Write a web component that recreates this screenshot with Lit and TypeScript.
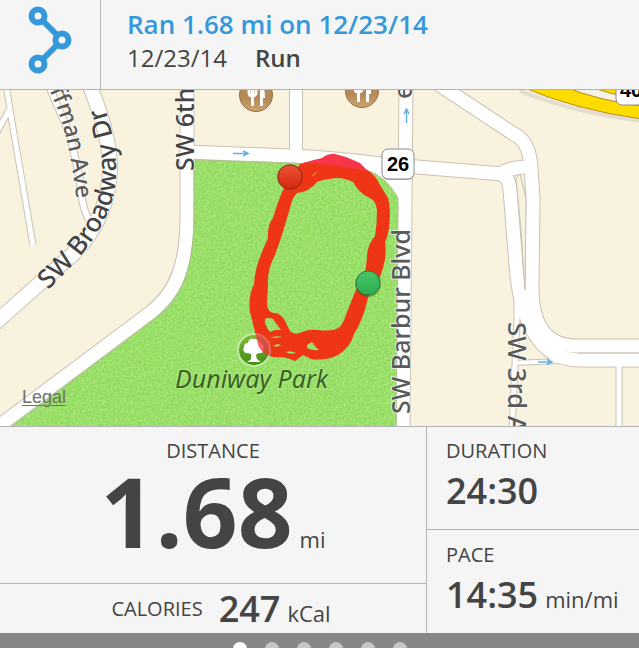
import { LitElement, html, css, svg } from "lit";
import { customElement, property, state } from "lit/decorators.js";

const ROADS: { d: string; w: number }[] = [
  { d: "M6 84 L12 122 L33 245", w: 5 },
  { d: "M-4 134 L9 110", w: 5 },
  { d: "M48 84 L70 135 L80 180 Q82 212 90 220", w: 6 },
  { d: "M89 84 C104 120 110 145 110 168 C109 205 95 232 73 254 L-6 324", w: 14 },
  { d: "M187 84 L187 215 C187 258 180 290 150 313 L-8 431", w: 13 },
  { d: "M187 152 L290 156 C320 157 350 160 380 164 L503 174", w: 13 },
  { d: "M296 84 V156", w: 12 },
  { d: "M406 84 L403 432", w: 13 },
  { d: "M438 84 L520 138 Q530 147 531 168 L533 198 L532 290 Q533 346 577 346 H645", w: 13 },
  { d: "M500 174 Q512 166 530 167", w: 13 },
  { d: "M500 174 Q509 176 510 190 L516 265 Q518 296 526 316 Q542 360 580 360 H645", w: 13 },
  { d: "M517 296 V320 L512 432", w: 5 },
  { d: "M514 363 L560 361", w: 4 },
  { d: "M619 364 V432", w: 5 },
];

const TRAIL =
  "M300 164 Q317 159 335 156 Q350 160 367 170 Q375 174 380 185 L388 198 Q391 208 389 228 Q388 236 385 242 Q387 254 383 268 L379 280 L368 298 Q363 320 354 334 Q350 348 338 355 Q326 361 311 359 L303 355 L295 361 Q289 358 282 357 Q273 358 267 355 Q258 350 257 340 L250 312 Q248 296 254 284 Q255 268 262 252 L268 238 Q267 226 273 218 Q277 204 282 192 L290 178 Z " +
  "M297 193 Q292 198 290 208 L282 235 L275 255 Q267 270 268 284 L267 305 Q268 312 274 313 Q281 313 285 321 L290 331 Q295 336 302 332 Q309 329 318 330 Q333 332 340 327 Q345 320 347 312 L355 292 L365 272 Q367 262 367 255 Q368 244 375 236 Q377 224 377 210 Q376 200 368 197 Q359 193 353 182 Q345 178 337 178 Q323 179 317 182 Q309 192 297 193 Z " +
  "M265 319 Q269 317 273 319 L281 330 Q276 329 270 332 Q264 325 265 319 Z " +
  "M269 338 Q277 335 282 337 Q277 338 269 338 Z M273 346 Q277 343 281 345 Q277 348 273 346 Z " +
  "M286 352 Q291 350 296 353 Q290 355 286 352 Z M307 345 L312 342 Q315 347 319 350 Q312 351 307 348 Z";

const food = (x: number, y: number) => svg`
  <g transform="translate(${x} ${y})">
    <circle r="16.500" fill="url(#brown)" stroke="#94713f"/>
    <path class="utensil" d="M-7 -9 V-3 Q-7 1 -4 1 Q0 1 0 -3 V-9 M-3.500 -9 V11" />
    <path d="M5 -10 Q9 -8 9 3 H7 V11 H4 V-10 Z" fill="#fff"/>
  </g>`;

@customElement("route-map")
export class RouteMap extends LitElement {
  static styles = css`
    :host { display: block; position: relative; }
    .map { display: block; width: 100%; height: auto; }
    .road { fill: none; stroke-linejoin: round; }
    .label {
      font: 500 25px "Noto Sans", "Open Sans", sans-serif;
      fill: #5a5a5a;
      stroke: #fff;
      stroke-opacity: 0.6;
      stroke-width: 2px;
      paint-order: stroke;
    }
    .minor { font-size: 23px; }
    .wide { font-size: 26px; }
    .major { fill: #444; }
    .park { font-style: italic; font-weight: 400; fill: #3c6226; stroke: #b5ef8c; }
    .shield { font: bold 20px "Liberation Sans", sans-serif; fill: #000; }
    .utensil { fill: none; stroke: #fff; stroke-width: 3; }
    .arrow { fill: none; stroke: #63b1e2; stroke-width: 1.5; }
    .legal {
      position: absolute;
      left: 22px;
      bottom: 19px;
      font: 18px/20px "Liberation Sans", sans-serif;
      color: #6f7068;
      text-underline-offset: 2px;
      text-decoration-thickness: 1px;
    }
  `;

  render() {
    return html`
      <svg class="map" viewBox="0 90 639 336" role="img" aria-label="Route around Duniway Park">
        <defs>
          <filter id="grass" x="0" y="0" width="100%" height="100%">
            <feTurbulence type="fractalNoise" baseFrequency="0.45" numOctaves="3" seed="4" />
            <feColorMatrix values="0 0 0 0 0.75  0 0 0 0 0.92  0 0 0 0 0.5  0.8 0 0 0 -0.22" />
            <feComposite in2="SourceGraphic" operator="in" />
          </filter>
          <linearGradient id="brown" x1="0" y1="0" x2="0" y2="1">
            <stop offset="0" stop-color="#b08a5e" /><stop offset="0.6" stop-color="#b58a58" /><stop offset="1" stop-color="#cba673" />
          </linearGradient>
          <linearGradient id="leaf" x1="0" y1="0" x2="0" y2="1">
            <stop offset="0" stop-color="#82bb3c" /><stop offset="1" stop-color="#3f8a12" />
          </linearGradient>
          <linearGradient id="start" x1="0" y1="0" x2="0" y2="1">
            <stop offset="0" stop-color="#45c468" /><stop offset="1" stop-color="#2fae4f" />
          </linearGradient>
          <linearGradient id="finish" x1="0" y1="0" x2="0" y2="1">
            <stop offset="0" stop-color="#ee5436" /><stop offset="1" stop-color="#d4270d" />
          </linearGradient>
          <clipPath id="tree-clip"><circle cx="254" cy="350" r="17" /></clipPath>
          <path id="broadway" d="M48 290 C88 252 114 218 116 176 C117 150 112 126 98 88" />
          <path id="hoffman" d="M43 78 C62 112 71 148 79 220" />
          <path id="trail" fill-rule="evenodd" d=${TRAIL} />
          <path id="lawn" d="M194 160 L290 163 Q335 165 366 170 Q386 176 398 198 L396 432 H4 L153 320 C182 299 194 270 194 215 Z" />
        </defs>
        <rect y="90" width="639" height="336" fill="#f8f2df" />
        <path d="M520 91 Q575 113 642 121" fill="none" stroke="#e2decf" stroke-width="4" />
        <path d="M523 88 Q575 110 642 119 V80 H523 Z" fill="#f6f2e4" />
        <path d="M520 86 Q575 110 642 119 V106 Q600 101 562 86 Z" fill="#ffdc00" stroke="#b68b1c" />
        <path d="M590 86 Q610 95 642 99 V86 Z" fill="#ffdc00" stroke="#b68b1c" />
        ${ROADS.map((r) => svg`<path class="road" d=${r.d} stroke="#c8c2b5" stroke-width=${r.w + 2} />`)}
        ${ROADS.map((r) => svg`<path class="road" d=${r.d} stroke="#fff" stroke-width=${r.w} />`)}
        <path d="M360 162 H404 V206 H390 Z" fill="#fff" />
        <path d="M516 178 L520 174 L526 199 L525 290 L521 230 Z" fill="#f8f2df" stroke="#c8c2b5" />
        <path d="M577 353 H642" stroke="#d0c9bd" />
        <use href="#lawn" fill="#8bda58" stroke="#a4bd83" />
        <use href="#lawn" fill="#fff" filter="url(#grass)" />

        ${food(256, 95)} ${food(362, 91)}
        <path class="arrow" d="M233 153.500 H248 M243 151 L248 153.500 L243 156" />
        <path class="arrow" d="M406.500 123 V109 M404 114 L406.500 109 L409 114" />
        <path class="arrow" d="M538 362 H552 M547 359.500 L552 362 L547 364.500" />

        <text class="label minor"><textPath href="#hoffman">offman Ave</textPath></text>
        <text class="label major wide"><textPath href="#broadway">SW Broadway Dr</textPath></text>
        <text class="label major" transform="translate(194 171) rotate(-90)">SW 6th</text>
        <text class="label" transform="translate(410 414) rotate(-90)">SW Barbur Blvd</text>
        <text class="label" transform="translate(412 99) rotate(-90)">e</text>
        <text class="label wide" transform="translate(508 322) rotate(90)">SW 3rd Ave</text>
        <text class="label park" x="175" y="388">Duniway Park</text>

        <use href="#trail" fill="#ee3515" />
        <path d="M303 163 L322 158 Q329 153 335 154 L346 157 L360 163 L369 172 Q340 164 303 163 Z" fill="#f8364a" />
        <path d="M312 176 L317 172" stroke="#f29a4a" />
        <circle cx="254" cy="350" r="16" fill="url(#leaf)" stroke="#c3eba0" stroke-width="2" />
        <path d="M250 360 Q252 358 251 354 Q249 353 246 353 Q242 351 244 347 Q244 343 248 343 Q249 338 254 339 Q259 339 260 343 Q265 345 263 349 Q264 353 260 353 Q257 353 256 355 Q256 358 258 360 L261 362 H247 Z" fill="#fff" />
        <g clip-path="url(#tree-clip)"><use href="#trail" fill="#f8303c" opacity="0.75" /></g>

        <circle cx="290" cy="177" r="13" fill="#7b3219" opacity="0.4" />
        <circle cx="290" cy="177" r="12" fill="url(#finish)" stroke="#9c2b16" />
        <circle cx="368" cy="284" r="13" fill="#245b24" opacity="0.4" />
        <circle cx="368" cy="283" r="12" fill="url(#start)" stroke="#28803c" />

        <rect x="382" y="150" width="32" height="30" rx="6" fill="#777" opacity="0.5" />
        <rect x="382" y="149" width="32" height="30" rx="6" fill="#fff" stroke="#8a8a8a" />
        <text class="shield" x="398" y="171" text-anchor="middle">26</text>
        <rect x="616" y="76" width="40" height="29" rx="6" fill="#fff" stroke="#8a8a8a" />
        <text class="shield" x="620" y="97">405</text>
      </svg>
      <a class="legal" href="#legal">Legal</a>
    `;
  }
}

@customElement("stat-value")
export class StatValue extends LitElement {
  @property() value = "";
  @property() unit = "";
  @property({ type: Boolean, reflect: true }) large = false;

  static styles = css`
    :host { display: flex; align-items: baseline; gap: 7px; white-space: nowrap; }
    .value { font-size: 36px; font-weight: 600; line-height: 48px; }
    .unit { font-size: 22px; line-height: 24px; }
    :host([large]) { justify-content: center; }
    :host([large]) .value { font-size: 96px; font-weight: 700; line-height: 96px; }
  `;

  render() {
    return html`<span class="value">${this.value}</span>${this.unit
        ? html`<span class="unit">${this.unit}</span>`
        : ""}`;
  }
}

@customElement("app-root")
export class AppRoot extends LitElement {
  @state() private page = 0;

  static styles = css`
    :host {
      display: flex;
      flex-direction: column;
      height: 100vh;
      overflow: hidden;
      background: #868686;
      color: #444;
      font-family: "Open Sans", sans-serif;
    }
    .header {
      display: flex;
      flex: none;
      background: #f5f5f5;
      border-bottom: 1px solid #b4b4b4;
    }
    .logo {
      display: flex;
      align-items: flex-start;
      justify-content: center;
      box-sizing: border-box;
      width: 101px;
      padding-top: 6px;
      border-right: 1px solid #b4b4b4;
    }
    .heading { padding: 7px 24px 14px 26px; line-height: 34px; }
    .title { margin: 0; font-size: 26px; font-weight: 600; color: #3498db; }
    .sub { display: flex; gap: 28px; margin: 0; font-size: 24px; }
    .kind { font-weight: 600; }
    .map { flex: none; }
    .stats {
      display: grid;
      flex: none;
      grid-template-columns: 2fr 1fr;
      background: #f5f5f5;
      border-top: 1px solid #b4b4b4;
    }
    .column { display: flex; flex-direction: column; min-width: 0; }
    .side { border-left: 1px solid #b4b4b4; }
    .label { margin: 0; font-size: 20px; font-weight: 400; line-height: 24px; }
    .distance { padding: 12px 0 24px; text-align: center; }
    .calories {
      display: flex;
      align-items: center;
      justify-content: center;
      gap: 16px;
      flex: 1;
      padding-left: 16px;
      border-top: 1px solid #b4b4b4;
    }
    .metric { padding: 12px 0 14px 19px; }
    .metric .label { margin-bottom: 4px; }
    .metric + .metric { padding-top: 13px; border-top: 1px solid #b4b4b4; }
    .pager { display: flex; flex: none; justify-content: center; gap: 18px; padding: 9px 0; }
    .dot {
      width: 14px;
      height: 14px;
      padding: 0;
      border: 0;
      border-radius: 50%;
      background: #c6c6c6;
    }
    .dot[aria-current="true"] { background: #fff; }
  `;

  render() {
    return html`
      <header class="header">
        <div class="logo">
          <svg width="46" height="70" viewBox="26 6 46 70" fill="none" stroke="#3498db" role="img" aria-label="Activity route">
            <path d="M37 16 L61 40 L37 64" stroke-width="6" />
            <g fill="#f5f5f5" stroke-width="6">
              <circle cx="37" cy="16" r="6.500" /><circle cx="61" cy="40" r="6.500" /><circle cx="37" cy="64" r="6.500" />
            </g>
          </svg>
        </div>
        <div class="heading">
          <h1 class="title">Ran 1.68 mi on 12/23/14</h1>
          <p class="sub"><span>12/23/14</span><span class="kind">Run</span></p>
        </div>
      </header>
      <route-map class="map"></route-map>
      <main class="stats">
        <div class="column">
          <section class="distance">
            <h2 class="label">DISTANCE</h2>
            <stat-value large value="1.68" unit="mi"></stat-value>
          </section>
          <section class="calories">
            <h2 class="label">CALORIES</h2>
            <stat-value value="247" unit="kCal"></stat-value>
          </section>
        </div>
        <div class="column side">
          <section class="metric">
            <h2 class="label">DURATION</h2>
            <stat-value value="24:30"></stat-value>
          </section>
          <section class="metric">
            <h2 class="label">PACE</h2>
            <stat-value value="14:35" unit="min/mi"></stat-value>
          </section>
        </div>
      </main>
      <nav class="pager" aria-label="Pages">
        ${[0, 1, 2, 3, 4, 5].map(
          (i) => html`<button
            class="dot"
            aria-label="Page ${i + 1}"
            aria-current=${this.page === i ? "true" : "false"}
            @click=${() => (this.page = i)}
          ></button>`
        )}
      </nav>
    `;
  }
}
